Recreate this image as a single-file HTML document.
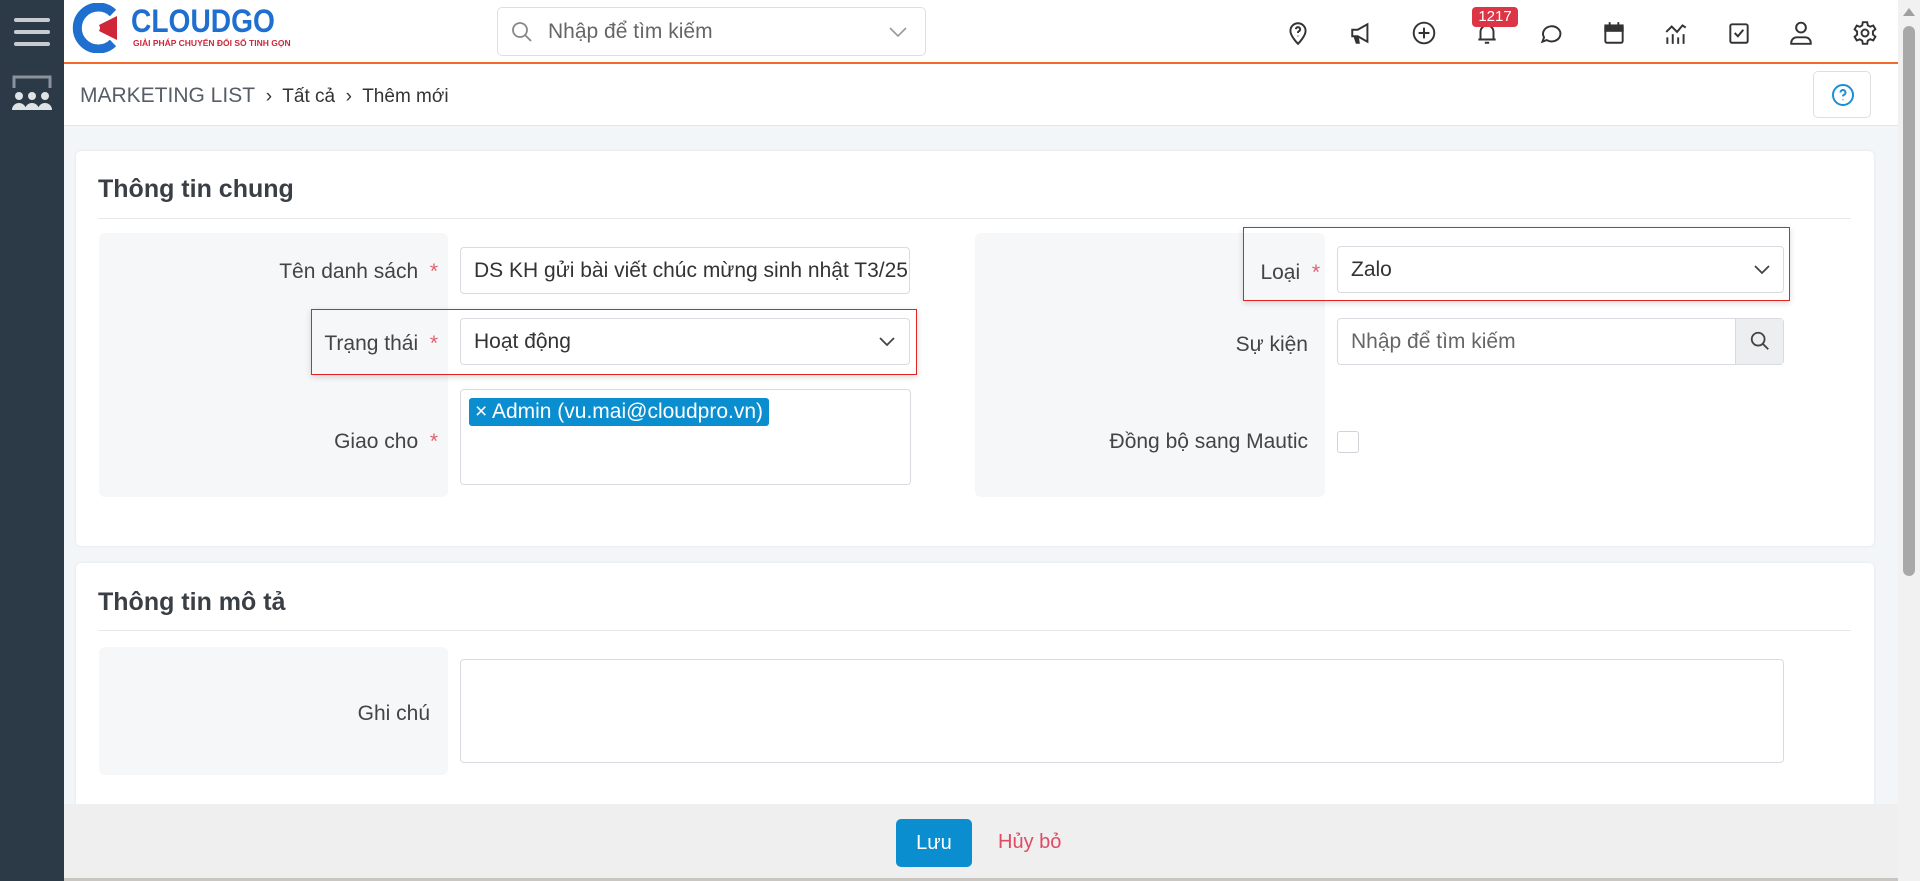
<!DOCTYPE html>
<html><head><meta charset="utf-8"><style>
*{box-sizing:border-box;margin:0;padding:0}
body{width:1920px;height:881px;overflow:hidden;font-family:"Liberation Sans",sans-serif;background:#f3f6f9;position:relative;color:#333}
.abs{position:absolute}
.sidebar{left:0;top:0;width:64px;height:881px;background:#2c3a47}
.header{left:64px;top:0;width:1834px;height:64px;background:#fff;border-bottom:2px solid #f26a2e}
.bc{left:64px;top:64px;width:1834px;height:62px;background:#fff;border-bottom:1px solid #e2e5e8}
.panel{background:#fff;border-radius:5px;box-shadow:0 0 3px rgba(0,0,0,.08)}
.lbl{background:#f6f7f9;border-radius:6px}
.label{font-size:21px;color:#444;text-align:right;white-space:nowrap}
.star{color:#e0606e}
.inp{background:#fff;border:1px solid #d8dbe0;border-radius:4px;font-size:21px;color:#333;padding-left:13px;display:flex;align-items:center}
.red{border:1.5px solid #e32222;box-shadow:0 2px 6px rgba(0,0,0,.15)}
.ic{top:20px;width:26px;height:26px}
</style></head><body>
<div class="abs sidebar">
 <div class="abs" style="left:14px;top:18px;width:36px;height:4px;background:#c8ccd0;border-radius:2px"></div>
 <div class="abs" style="left:14px;top:30px;width:36px;height:4px;background:#c8ccd0;border-radius:2px"></div>
 <div class="abs" style="left:14px;top:42px;width:36px;height:4px;background:#c8ccd0;border-radius:2px"></div>
 <svg class="abs" style="left:9px;top:74px" width="46" height="40" viewBox="0 0 46 40"><path d="M5 14V3h36v11" stroke="#8a939c" stroke-width="3" fill="none"/><g fill="#dfe3e6"><circle cx="10" cy="22" r="4"/><circle cx="23" cy="22" r="4"/><circle cx="36" cy="22" r="4"/><path d="M3 36a7 7 0 0 1 14 0zM16 36a7 7 0 0 1 14 0zM29 36a7 7 0 0 1 14 0z"/></g></svg>
</div>
<div class="abs header">
 <svg class="abs" style="left:7px;top:3px" width="56" height="50" viewBox="0 0 56 50"><path d="M42 10A21 21 0 1 0 42 40" stroke="#1e6fd0" stroke-width="9" fill="none"/><path d="M22 25L46 13v24z" fill="#d0263a"/><circle cx="24" cy="25" r="5" fill="#fff"/></svg>
 <div class="abs" style="left:67px;top:3px;font-size:32px;font-weight:bold;color:#1e6fd0;transform:scaleX(.88);transform-origin:left">CLOUDGO</div>
 <div class="abs" style="left:69px;top:38px;font-size:8.5px;font-weight:bold;color:#d0263a">GIẢI PHÁP CHUYỂN ĐỔI SỐ TINH GỌN</div>
 <div class="abs" style="left:433px;top:7px;width:429px;height:49px;border:1px solid #dde0e3;border-radius:5px">
  <svg class="abs" style="left:12px;top:12px" width="24" height="24" viewBox="0 0 24 24"><circle cx="10" cy="10" r="7" stroke="#888" stroke-width="1.8" fill="none"/><path d="M15 15l6 6" stroke="#888" stroke-width="1.8"/></svg>
  <div class="abs" style="left:50px;top:12px;font-size:21px;color:#666">Nhập để tìm kiếm</div>
  <svg class="abs" style="left:390px;top:17px" width="20" height="14" viewBox="0 0 20 14"><path d="M2 3l8 8 8-8" stroke="#999" stroke-width="1.6" fill="none"/></svg>
 </div>
 <svg class="abs ic" style="left:1221px" viewBox="0 0 24 24" fill="none" stroke="#333" stroke-width="1.8"><path d="M12 22s-7-7-7-12a7 7 0 0 1 14 0c0 5-7 12-7 12z"/><path d="M10 8.5a2 2 0 1 1 2.5 2c-.5.2-.5.8-.5 1.5M12 14.5v.5"/></svg>
 <svg class="abs ic" style="left:1285px" viewBox="0 0 24 24" fill="#333" stroke="#333" stroke-width="1.8"><path d="M3 9h5l9-5v16l-9-5H3z" fill="none"/><path d="M5 15l2 6h2l-1-6" /></svg>
 <svg class="abs ic" style="left:1347px" viewBox="0 0 24 24" fill="none" stroke="#333" stroke-width="1.8"><circle cx="12" cy="12" r="9.5"/><path d="M12 7v10M7 12h10"/></svg>
 <svg class="abs ic" style="left:1410px" viewBox="0 0 24 24" fill="none" stroke="#333" stroke-width="1.8"><path d="M6 18V11a6 6 0 0 1 12 0v7M4 18h16M10 21h4"/></svg>
 <div class="abs" style="left:1408px;top:7px;width:46px;height:20px;background:#dc3545;color:#fff;border-radius:4px;font-size:15px;text-align:center;line-height:20px">1217</div>
 <svg class="abs ic" style="left:1473px" viewBox="0 0 24 24" fill="none" stroke="#333" stroke-width="1.8"><path d="M5 20l1.5-4A8 7 0 1 1 9 18.5z"/></svg>
 <svg class="abs ic" style="left:1537px" viewBox="0 0 24 24" fill="#333" stroke="#333" stroke-width="1.8"><rect x="4" y="5" width="16" height="16" rx="1.5" fill="none"/><rect x="4" y="5" width="16" height="5"/><path d="M8 2v4M16 2v4"/></svg>
 <svg class="abs ic" style="left:1599px" viewBox="0 0 24 24" fill="none" stroke="#333" stroke-width="1.8"><path d="M3 11l5-5 5 5 5-6 3 2M4 22v-6M9 22v-9M14 22v-6M19 22v-9"/></svg>
 <svg class="abs ic" style="left:1662px" viewBox="0 0 24 24" fill="none" stroke="#333" stroke-width="1.8"><rect x="4" y="4" width="16" height="17" rx="1.5"/><path d="M8 12l3 3 5-6"/></svg>
 <svg class="abs ic" style="left:1724px" viewBox="0 0 24 24" fill="none" stroke="#333" stroke-width="1.8"><circle cx="12" cy="7" r="4.5"/><path d="M3 22v-1a5 5 0 0 1 5-5h8a5 5 0 0 1 5 5v1z"/></svg>
 <svg class="abs ic" style="left:1788px" viewBox="0 0 24 24" fill="none" stroke="#333" stroke-width="1.8"><circle cx="12" cy="12" r="3.2"/><path d="M10 2h4l.6 3 2.2 1.2 2.8-1.1 2 3.4-2.3 2v2.9l2.3 2-2 3.4-2.8-1.1L14.6 19 14 22h-4l-.6-3-2.2-1.2-2.8 1.1-2-3.4 2.3-2v-2.9l-2.3-2 2-3.4 2.8 1.1L9.4 5z"/></svg>
</div>
<div class="abs" style="left:1898px;top:0;width:22px;height:881px;background:#f1f1f1"><div class="abs" style="left:5px;top:26px;width:12px;height:550px;background:#a8a8a8;border-radius:6px"></div><div class="abs" style="left:5px;top:8px;width:0;height:0;border-left:6px solid transparent;border-right:6px solid transparent;border-bottom:8px solid #a0a0a0"></div></div>
<div class="abs bc">
 <div class="abs" style="left:16px;top:20px;font-size:21px;color:#555d66">MARKETING LIST <span style="color:#333;font-size:19px">&nbsp;›&nbsp; Tất cả &nbsp;›&nbsp; Thêm mới</span></div>
 <div class="abs" style="left:1749px;top:7px;width:58px;height:47px;border:1px solid #dde0e3;border-radius:5px"><svg class="abs" style="left:17px;top:11px" width="24" height="24" viewBox="0 0 24 24" fill="none" stroke="#1b8fd6" stroke-width="2"><circle cx="12" cy="12" r="10"/><path d="M9.5 9.5a2.5 2.5 0 1 1 3.5 2.3c-.7.3-1 .8-1 1.6M12 16.5v.6"/></svg></div>
</div>
<div class="abs panel" style="left:76px;top:151px;width:1798px;height:395px">
 <div class="abs" style="left:22px;top:24px;font-size:25px;font-weight:bold;color:#3a3f45">Thông tin chung</div>
 <div class="abs" style="left:22px;top:67px;width:1753px;height:1px;background:#e6e8ea"></div>
</div>
<div class="abs lbl" style="left:99px;top:233px;width:349px;height:264px"></div>
<div class="abs lbl" style="left:975px;top:233px;width:350px;height:264px"></div>
<div class="abs label" style="left:140px;top:260px;width:298px">Tên danh sách &nbsp;<span class="star">*</span></div>
<div class="abs inp" style="left:460px;top:247px;width:450px;height:47px;overflow:hidden;white-space:nowrap">DS KH gửi bài viết chúc mừng sinh nhật T3/25</div>
<div class="abs red" style="left:311px;top:309px;width:606px;height:66px"></div>
<div class="abs label" style="left:140px;top:332px;width:298px">Trạng thái &nbsp;<span class="star">*</span></div>
<div class="abs inp" style="left:460px;top:318px;width:450px;height:47px">Hoạt động<svg class="abs" style="left:417px;top:17px" width="18" height="12" viewBox="0 0 18 12"><path d="M2 2l7 7 7-7" stroke="#444" stroke-width="1.8" fill="none"/></svg></div>
<div class="abs label" style="left:140px;top:430px;width:298px">Giao cho &nbsp;<span class="star">*</span></div>
<div class="abs inp" style="left:460px;top:389px;width:451px;height:96px;align-items:flex-start;padding:8px"><div style="background:#0b8ed0;color:#fff;border-radius:3px;padding:2px 6px;font-size:21px">× Admin (vu.mai@cloudpro.vn)</div></div>
<div class="abs red" style="left:1243px;top:227px;width:547px;height:74px"></div>
<div class="abs label" style="left:1100px;top:261px;width:220px">Loại &nbsp;<span class="star">*</span></div>
<div class="abs inp" style="left:1337px;top:246px;width:447px;height:47px">Zalo<svg class="abs" style="left:415px;top:17px" width="18" height="12" viewBox="0 0 18 12"><path d="M2 2l7 7 7-7" stroke="#444" stroke-width="1.8" fill="none"/></svg></div>
<div class="abs label" style="left:1100px;top:333px;width:208px">Sự kiện</div>
<div class="abs inp" style="left:1337px;top:318px;width:447px;height:47px;color:#666">Nhập để tìm kiếm<div class="abs" style="right:0;top:0;width:48px;height:45px;background:#eceef0;border-left:1px solid #d8dbe0"><svg class="abs" style="left:13px;top:11px" width="22" height="22" viewBox="0 0 24 24"><circle cx="10" cy="10" r="7" stroke="#444" stroke-width="2" fill="none"/><path d="M15 15l6 6" stroke="#444" stroke-width="2"/></svg></div></div>
<div class="abs label" style="left:1000px;top:430px;width:308px">Đồng bộ sang Mautic</div>
<div class="abs" style="left:1337px;top:431px;width:22px;height:22px;border:1px solid #cfd3d7;border-radius:3px;background:#fff"></div>
<div class="abs panel" style="left:76px;top:563px;width:1798px;height:260px">
 <div class="abs" style="left:22px;top:25px;font-size:25px;font-weight:bold;color:#3a3f45">Thông tin mô tả</div>
 <div class="abs" style="left:22px;top:67px;width:1753px;height:1px;background:#e6e8ea"></div>
</div>
<div class="abs lbl" style="left:99px;top:647px;width:349px;height:128px"></div>
<div class="abs label" style="left:180px;top:702px;width:250px">Ghi chú</div>
<div class="abs inp" style="left:460px;top:659px;width:1324px;height:104px"></div>
<div class="abs" style="left:64px;top:804px;width:1834px;height:77px;background:#efefef;border-bottom:3px solid #c9c6c2"></div>
<div class="abs" style="left:896px;top:819px;width:76px;height:48px;background:#0b8ed0;border-radius:5px;color:#fff;font-size:20px;text-align:center;line-height:48px">Lưu</div>
<div class="abs" style="left:998px;top:831px;font-size:20px;color:#e04a62">Hủy bỏ</div>
</body></html>
